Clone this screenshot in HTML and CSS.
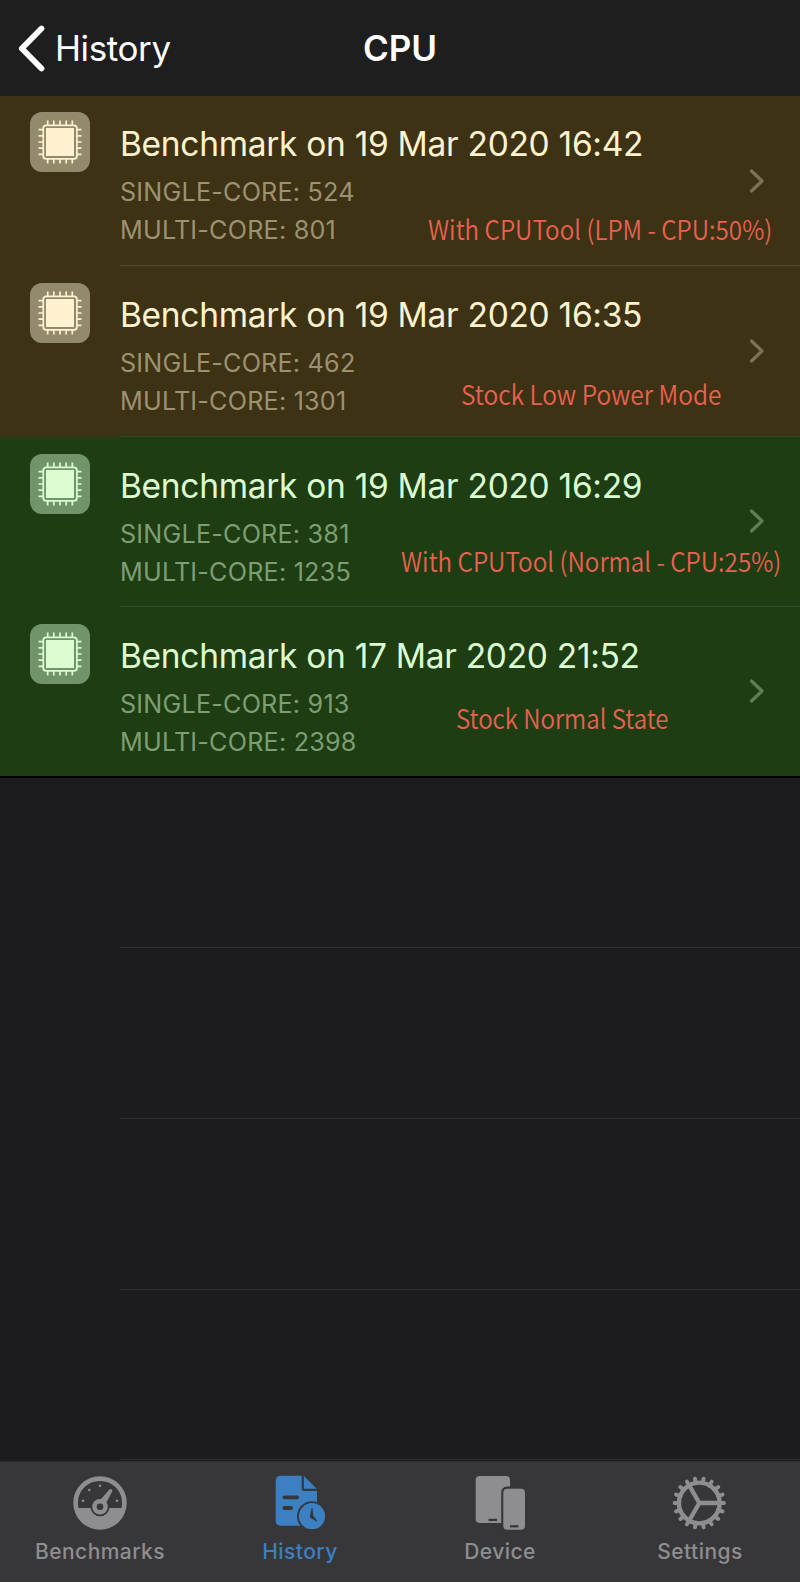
FILE: index.html
```html
<!DOCTYPE html>
<html lang="en">
<head>
    <meta charset="UTF-8">
    <meta name="viewport" content="width=device-width, initial-scale=1.0">
    <title>CPU</title>
    <link rel="stylesheet" href="styles.css">
</head>
<body>
    <!-- Shared icons -->
    <svg class="defs" width="0" height="0">
        <symbol id="chip" viewBox="0 0 60 60">
            <path d="M17.7 8.5V13M23.8 8.5V13M30 8.5V13M36.2 8.5V13M42.3 8.5V13M17.7 47V51.5M23.8 47V51.5M30 47V51.5M36.2 47V51.5M42.3 47V51.5M8.5 17.7H13M8.5 23.8H13M8.5 30H13M8.5 36.2H13M8.5 42.3H13M47 17.7H51.5M47 23.8H51.5M47 30H51.5M47 36.2H51.5M47 42.3H51.5" stroke="currentColor" stroke-width="1.7"/>
            <rect x="13.3" y="13.3" width="33.6" height="33.6" rx="3" fill="none" stroke="currentColor" stroke-width="1.7"/>
            <rect x="16" y="16" width="28" height="28" fill="currentColor"/>
        </symbol>
        <symbol id="chevron" viewBox="0 0 16 26">
            <path d="M2.5 3L13 13L2.5 23" fill="none" stroke="currentColor" stroke-width="3.2" stroke-linecap="round" stroke-linejoin="round"/>
        </symbol>
    </svg>

    <div class="screen">
        <!-- Navigation bar -->
        <header class="navbar">
            <a class="back">
                <svg class="back-icon" viewBox="0 0 30 48"><path d="M24.5 4.5L4.8 24.5L24.5 44.5" fill="none" stroke="currentColor" stroke-width="5.8" stroke-linecap="round" stroke-linejoin="round"/></svg>
                <span class="back-label">History</span>
            </a>
            <h1 class="title">CPU</h1>
        </header>

        <!-- Results -->
        <main class="list">
            <div class="row amber">
                <div class="tile"><svg><use href="#chip"/></svg></div>
                <div class="cell">
                    <div class="info">
                        <h2>Benchmark on 19 Mar 2020 16:42</h2>
                        <p>SINGLE-CORE: 524</p>
                        <p>MULTI-CORE: 801</p>
                    </div>
                    <svg class="chevron"><use href="#chevron"/></svg>
                </div>
                <span class="note note-1">With CPUTool (LPM - CPU:50%)</span>
            </div>
            <div class="row amber">
                <div class="tile"><svg><use href="#chip"/></svg></div>
                <div class="cell last-amber">
                    <div class="info">
                        <h2>Benchmark on 19 Mar 2020 16:35</h2>
                        <p>SINGLE-CORE: 462</p>
                        <p>MULTI-CORE: 1301</p>
                    </div>
                    <svg class="chevron"><use href="#chevron"/></svg>
                </div>
                <span class="note note-2">Stock Low Power Mode</span>
            </div>
            <div class="row green">
                <div class="tile"><svg><use href="#chip"/></svg></div>
                <div class="cell">
                    <div class="info">
                        <h2>Benchmark on 19 Mar 2020 16:29</h2>
                        <p>SINGLE-CORE: 381</p>
                        <p>MULTI-CORE: 1235</p>
                    </div>
                    <svg class="chevron"><use href="#chevron"/></svg>
                </div>
                <span class="note note-3">With CPUTool (Normal - CPU:25%)</span>
            </div>
            <div class="row green last">
                <div class="tile"><svg><use href="#chip"/></svg></div>
                <div class="cell">
                    <div class="info">
                        <h2>Benchmark on 17 Mar 2020 21:52</h2>
                        <p>SINGLE-CORE: 913</p>
                        <p>MULTI-CORE: 2398</p>
                    </div>
                    <svg class="chevron"><use href="#chevron"/></svg>
                </div>
                <span class="note note-4">Stock Normal State</span>
            </div>
            <div class="row empty"><div class="cell"></div></div>
            <div class="row empty"><div class="cell"></div></div>
            <div class="row empty"><div class="cell"></div></div>
            <div class="row empty"><div class="cell"></div></div>
        </main>

        <!-- Tab bar -->
        <nav class="tabbar">
            <a class="tab">
                <svg class="tab-icon" viewBox="0 0 56 56">
                    <circle cx="28" cy="28" r="24.4" fill="none" stroke="currentColor" stroke-width="4.6"/>
                    <path d="M3.6 33H52.4A25 25 0 0 1 3.6 33Z" fill="currentColor"/>
                    <circle class="cut" cx="28" cy="31.7" r="9.6"/>
                    <path d="M26.5 27L37 14.9Q38.8 13.3 40.1 14.8Q40.5 15.8 39.9 17L33.3 29.5Z" fill="currentColor"/>
                    <circle cx="28" cy="31.7" r="7.8" fill="currentColor"/>
                    <circle class="cut" cx="28" cy="31.7" r="3.3"/>
                    <g fill="currentColor">
                        <circle cx="11" cy="25.7" r="1.3"/>
                        <circle cx="17.3" cy="15" r="1.3"/>
                        <circle cx="28" cy="10.7" r="1.3"/>
                        <circle cx="45" cy="25.7" r="1.3"/>
                    </g>
                </svg>
                <span class="tab-label">Benchmarks</span>
            </a>
            <a class="tab active">
                <svg class="tab-icon" viewBox="0 0 56 56">
                    <path d="M9 .8H29.7V13.5Q29.7 16 32.2 16H45V50.7H9Q3.7 50.7 3.7 45.4V6.1Q3.7 .8 9 .8Z" fill="currentColor"/>
                    <path d="M31.9 1L44.6 13.8H31.9Z" fill="currentColor"/>
                    <path class="cut-line" d="M12.4 22.3H25.2M12.4 33H19" stroke-width="3.8" stroke-linecap="round"/>
                    <circle class="cut" cx="40" cy="41.2" r="15"/>
                    <circle cx="40" cy="41.2" r="13.1" fill="currentColor"/>
                    <path class="cut" d="M39.6 33.2H40.5L41.3 40.8L45 45.6L44.5 46.6L38.5 43Q37.5 42 38 40.5Z"/>
                </svg>
                <span class="tab-label">History</span>
            </a>
            <a class="tab">
                <svg class="tab-icon" viewBox="0 0 56 56">
                    <rect x="3.7" y=".9" width="34.3" height="47.2" rx="4" fill="currentColor"/>
                    <path class="cut-line" d="M16.5 44.9H25" stroke-width="2.2"/>
                    <rect class="cut" x="29.2" y="11.6" width="26" height="45.2" rx="5.5"/>
                    <rect x="31.3" y="13.7" width="21.7" height="41" rx="4" fill="currentColor"/>
                    <path class="cut-line" d="M38 51.3H46.4" stroke-width="2.2"/>
                </svg>
                <span class="tab-label">Device</span>
            </a>
            <a class="tab">
                <svg class="tab-icon" viewBox="-27.3 -28 56 56">
                    <g fill="none" stroke="currentColor">
                        <path id="teeth" stroke-width="3.9" stroke-linecap="round" d="M20 0H24.7M18.8 6.8L23.2 8.4M15.3 12.9L18.9 15.9M10 17.3L12.35 21.4M3.5 19.7L4.3 24.3M18.8 -6.8L23.2 -8.4M15.3 -12.9L18.9 -15.9M10 -17.3L12.35 -21.4M3.5 -19.7L4.3 -24.3"/>
                        <use href="#teeth" transform="scale(-1 1)"/>
                        <circle r="20.4" stroke-width="4.4"/>
                        <path d="M19 0H0M-9.5 -16.5L0 0L-9.5 16.5" stroke-width="4.4"/>
                    </g>
                </svg>
                <span class="tab-label">Settings</span>
            </a>
        </nav>
    </div>
</body>
</html>
```
FILE: styles.css
```css
* {
    margin: 0;
    padding: 0;
    box-sizing: border-box;
}

body {
    background: #1c1c1e;
    font-family: Inter, 'Liberation Sans', sans-serif;
}

.defs {
    display: block;
}

.screen {
    width: 800px;
    height: 1582px;
    display: flex;
    flex-direction: column;
    overflow: hidden;
}

/* Navigation bar */
.navbar {
    height: 96px;
    flex: none;
    display: grid;
    grid-template-columns: 1fr auto 1fr;
    align-items: center;
    background: #1e1e1e;
    color: #fff;
}

.back {
    display: flex;
    align-items: center;
    padding-left: 17px;
}

.back-icon {
    width: 30px;
    height: 48px;
    margin-right: 8px;
}

.back-label {
    font-size: 35px;
    font-weight: 400;
    letter-spacing: -0.4px;
}

.title {
    font-size: 35px;
    font-weight: 600;
}

/* List */
.list {
    flex: 1;
    min-height: 0;
    overflow: hidden;
}

.row {
    position: relative;
    height: 170.6px;
    display: flex;
    padding-left: 30px;
}

.row:first-child {
    height: 170px;
}

.amber {
    background: #3d3213;
    color: #fef2d0;
}

.green {
    background: #1e3d12;
    color: #dcfdd1;
}

.tile {
    width: 60px;
    height: 60px;
    flex: none;
    margin: 17px 30px 0 0;
    border-radius: 12px;
    background: #938a6c;
}

.row:first-child .tile {
    margin-top: 16px;
}

.green .tile {
    background: #71946a;
}

.tile svg {
    display: block;
    width: 60px;
    height: 60px;
}

.cell {
    flex: 1;
    display: flex;
    align-items: center;
    justify-content: space-between;
    padding-right: 35px;
    border-bottom: 1px solid #52472a;
}

.last-amber {
    border-color: #394a22;
}

.green .cell {
    border-color: #33502a;
}

.green.last {
    border-bottom: 2px solid #000;
}

.green.last .cell {
    border-bottom: none;
}

.empty {
    padding-left: 120px;
}

.empty .cell {
    border-color: #303032;
}

.info {
    align-self: flex-start;
    padding-top: 28px;
}

.row:first-child .info {
    padding-top: 27px;
}

.info h2 {
    font-size: 33.5px;
    line-height: 42px;
    font-weight: 400;
    letter-spacing: -0.3px;
    white-space: nowrap;
}

.info p {
    font-size: 25.2px;
    line-height: 38px;
    font-weight: 400;
    letter-spacing: 0.2px;
    color: #9c9171;
}

.info h2 + p {
    margin-top: 8px;
}

.green .info p {
    color: #7d9d74;
}

.chevron {
    width: 16px;
    height: 26px;
    color: #7c7354;
}

.green .chevron {
    color: #5c8052;
}

/* Red remarks written over the rows */
.note {
    position: absolute;
    font-family: 'Noto Sans CJK JP', 'Open Sans', sans-serif;
    font-size: 26.5px;
    line-height: 36px;
    font-weight: 350;
    color: #ea6152;
    white-space: nowrap;
    transform: scaleX(0.914);
    transform-origin: left;
}

.note-1 {
    left: 428px;
    top: 115px;
}

.note-2 {
    left: 461px;
    top: 110px;
    transform: scaleX(0.924);
}

.note-3 {
    left: 401px;
    top: 106px;
}

.note-4 {
    left: 456px;
    top: 93px;
    transform: scaleX(0.908);
}

/* Tab bar */
.tabbar {
    height: 121px;
    flex: none;
    display: grid;
    grid-template-columns: repeat(4, 1fr);
    background: #373739;
    border-top: 1px solid #2b2b2d;
}

.tab {
    display: flex;
    flex-direction: column;
    align-items: center;
    padding-top: 13px;
    color: #8e8e90;
}

.tab.active {
    color: #3c80c2;
}

.tab-icon {
    width: 56px;
    height: 56px;
}

.tab-label {
    margin-top: 7px;
    font-size: 21px;
    line-height: 28px;
    font-weight: 500;
    letter-spacing: 0.45px;
}

.cut {
    fill: #373739;
}

.cut-line {
    stroke: #373739;
    fill: none;
}
```
